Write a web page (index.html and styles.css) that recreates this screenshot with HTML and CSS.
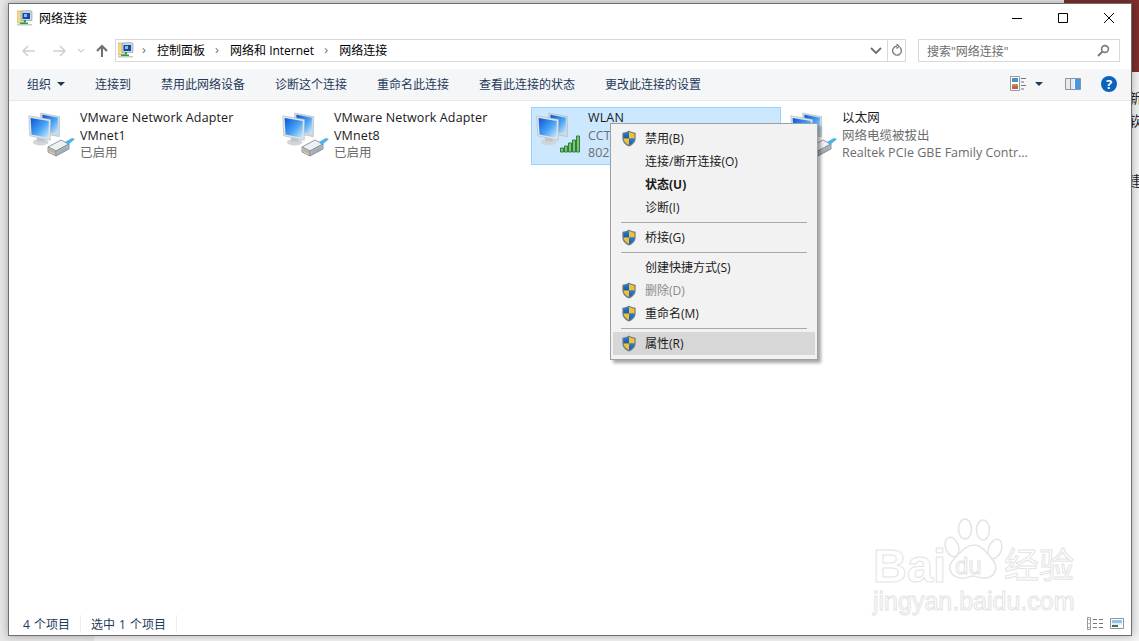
FILE: index.html
```html
<!DOCTYPE html>
<html lang="zh-CN">
<head>
    <meta charset="UTF-8">
    <title>网络连接</title>
    <link rel="stylesheet" href="styles.css">
</head>
<body>
    <!-- Icon definitions -->
    <svg class="defs" width="0" height="0">
        <defs>
            <linearGradient id="screen" x1="0" y1="0" x2="1" y2="1">
                <stop offset="0" stop-color="#0a55d8"/>
                <stop offset="0.55" stop-color="#4aa4f4"/>
                <stop offset="1" stop-color="#d5eeff"/>
            </linearGradient>
            <linearGradient id="shieldLeft" x1="0" y1="0" x2="0" y2="1">
                <stop offset="0" stop-color="#2a7fd8"/>
                <stop offset="1" stop-color="#0b5cb5"/>
            </linearGradient>
            <symbol id="monitors" viewBox="0 0 44 38">
                <path d="M15 2l21 4-.5 22-20-4z" fill="#cfd8df" stroke="#aab4bc" stroke-width=".6"/>
                <path d="M17 4l17 3.200-.4 17.800-16.600-3.400z" fill="url(#screen)"/>
                <path d="M2 5l24 4-.5 23L3 27z" fill="#dfe4e8" stroke="#a8b0b6" stroke-width=".6"/>
                <path d="M4 7.500l20 3.200-.4 18.800L5 25.500z" fill="url(#screen)"/>
                <ellipse cx="15" cy="34" rx="8.500" ry="3.600" fill="#d2d5d7"/>
                <path d="M11 29l8 1.500v3l-8-.5z" fill="#bfc5c9"/>
            </symbol>
            <symbol id="plug" viewBox="0 0 28 20">
                <path d="M1 10L14 3l8 4L9 14z" fill="#eef1f3" stroke="#78838c" stroke-width=".8"/>
                <path d="M1 10l8 4v5l-8-4z" fill="#d5dade" stroke="#78838c" stroke-width=".8"/>
                <path d="M9 14l13-7v5L9 19z" fill="#b3bbc2" stroke="#78838c" stroke-width=".8"/>
                <path d="M3 12v2.500M5 13v2.500M7 14v2.500" stroke="#b08a30" stroke-width="1"/>
                <path d="M11 15.500l9-5M11 17l9-5" stroke="#8e98a0" stroke-width=".6"/>
                <path d="M18 5l7-4 3 1-7 6z" fill="#4fb0e8"/>
            </symbol>
            <symbol id="shield" viewBox="0 0 16 18">
                <path d="M8 .5c2 1.500 4.500 2.200 7 2.300v6.200c0 4-3 6.800-7 8.500-4-1.700-7-4.500-7-8.500V2.800C3.500 2.700 6 2 8 .5z" fill="#6b7a88"/>
                <path d="M8 1.800V9H2.200V3.900C4.300 3.700 6.300 3 8 1.800z" fill="url(#shieldLeft)"/>
                <path d="M8 1.800c1.700 1.200 3.700 1.900 5.800 2.100V9H8z" fill="#f6c02c"/>
                <path d="M2.200 9H8v6.900C4.700 14.400 2.400 12.200 2.200 9z" fill="#f6c02c"/>
                <path d="M8 9h5.800c-.2 3.200-2.500 5.400-5.800 6.900z" fill="url(#shieldLeft)"/>
            </symbol>
            <symbol id="folderNet" viewBox="0 0 16 16">
                <path d="M0 1h7v12H0z" fill="#f3dc8c" stroke="#c0a858" stroke-width=".6"/>
                <path d="M4 1.500l8-1.500 3 1.500v9H4z" fill="#ccd4dc" stroke="#8d99a5" stroke-width=".6"/>
                <path d="M5.500 3h7.500v6H5.500z" fill="#1546a8"/>
                <path d="M7 4h3v3H7z" fill="#7ec0f0"/>
                <path d="M7 10h2v2.500H7z" fill="#21a34a"/>
                <path d="M3 12.500h8V15H3z" fill="#21a34a"/>
                <path d="M0 14h15v1.500H0z" fill="#c4c9cc"/>
            </symbol>
        </defs>
    </svg>

    <!-- Scraps of the desktop behind the window -->
    <div class="wallpaper"></div>
    <div class="behind-strip">
        <span class="behind-word word-new">新</span>
        <span class="behind-word word-soft">软</span>
        <span class="behind-word word-build">建</span>
    </div>
    <div class="behind-floor"></div>

    <div class="window">
        <!-- Title bar -->
        <header class="titlebar">
            <svg class="title-icon"><use href="#folderNet"/></svg>
            <span class="title-text">网络连接</span>
            <div class="win-buttons">
                <button class="win-btn">
                    <svg width="12" height="12" viewBox="0 0 12 12"><path d="M1 6.500h10" stroke="#000" fill="none"/></svg>
                </button>
                <button class="win-btn">
                    <svg width="12" height="12" viewBox="0 0 12 12"><path d="M1.500 1.500h9v9h-9z" stroke="#000" fill="none"/></svg>
                </button>
                <button class="win-btn">
                    <svg width="12" height="12" viewBox="0 0 12 12"><path d="M1 1l10 10M11 1L1 11" stroke="#000" fill="none"/></svg>
                </button>
            </div>
        </header>

        <!-- Navigation row -->
        <nav class="navbar">
            <svg class="nav-arrow" width="16" height="14" viewBox="0 0 16 14"><path d="M14 7H2M7 2L2 7l5 5" stroke="#cfcfcf" stroke-width="1.500" fill="none"/></svg>
            <svg class="nav-arrow" width="16" height="14" viewBox="0 0 16 14"><path d="M2 7h12M9 2l5 5-5 5" stroke="#cfcfcf" stroke-width="1.500" fill="none"/></svg>
            <svg class="nav-down" width="8" height="6" viewBox="0 0 8 6"><path d="M1 1l3 3 3-3" stroke="#cfcfcf" stroke-width="1.200" fill="none"/></svg>
            <svg class="nav-up" width="14" height="14" viewBox="0 0 14 14"><path d="M7 13V2M2 7l5-5 5 5" stroke="#6e6e6e" stroke-width="2" fill="none"/></svg>
            <div class="address">
                <svg class="address-icon"><use href="#folderNet"/></svg>
                <span class="crumb-sep">›</span>
                <span class="crumb">控制面板</span>
                <span class="crumb-sep">›</span>
                <span class="crumb">网络和 Internet</span>
                <span class="crumb-sep">›</span>
                <span class="crumb">网络连接</span>
                <svg class="address-down" width="12" height="8" viewBox="0 0 12 8"><path d="M1 1l5 5 5-5" stroke="#6e6e6e" stroke-width="1.800" fill="none"/></svg>
                <span class="address-refresh">
                    <svg width="12" height="13" viewBox="0 0 12 13"><path d="M8.800 3.300a4.400 4.400 0 1 1-2.800-1M5.500 0l2.500 2.300-2.500 2.200" stroke="#7b7b7b" stroke-width="1.400" fill="none"/></svg>
                </span>
            </div>
            <div class="search">
                <span class="search-text">搜索"网络连接"</span>
                <svg width="13" height="13" viewBox="0 0 13 13"><circle cx="8" cy="5" r="3.400" stroke="#7b7b7b" stroke-width="1.600" fill="none"/><path d="M5.500 7.500L1 12" stroke="#7b7b7b" stroke-width="2"/></svg>
            </div>
        </nav>

        <!-- Command bar -->
        <div class="toolbar">
            <span class="tool tool-menu">组织<i class="caret"></i></span>
            <span class="tool">连接到</span>
            <span class="tool">禁用此网络设备</span>
            <span class="tool">诊断这个连接</span>
            <span class="tool">重命名此连接</span>
            <span class="tool">查看此连接的状态</span>
            <span class="tool">更改此连接的设置</span>
            <div class="tool-right">
                <svg class="view-icon" width="17" height="15" viewBox="0 0 17 15">
                    <path d="M.5.500h9v14h-9z" fill="#fff" stroke="#9a9a9a"/>
                    <path d="M2 2h6v4H2z" fill="#4d8fd0"/>
                    <path d="M2 8h3v2H2z" fill="#d88a3a"/>
                    <path d="M5 8h3v2H5z" fill="#7fb04a"/>
                    <path d="M2 10h6v3H2z" fill="#c85a5a"/>
                    <path d="M11 2.500h5M11 6h3M11 9.500h5M11 13h3" stroke="#6e7680"/>
                </svg>
                <i class="caret caret-view"></i>
                <svg class="pane-icon" width="16" height="12" viewBox="0 0 16 12">
                    <path d="M.5.500h15v11H.5z" fill="#fff" stroke="#8d949b"/>
                    <path d="M1 1h4v10H1zM6 1h3v10H6z" fill="#e8ebee"/>
                    <path d="M5.500 1v10" stroke="#8d949b"/>
                    <path d="M10 1h5v10h-5z" fill="#3f9be8"/>
                </svg>
                <span class="help">?</span>
            </div>
        </div>

        <!-- Connections -->
        <main class="content">
            <div class="tile">
                <div class="tile-icon">
                    <svg class="icon-monitors"><use href="#monitors"/></svg>
                    <svg class="icon-plug"><use href="#plug"/></svg>
                </div>
                <div class="tile-text">
                    <div>VMware Network Adapter</div>
                    <div>VMnet1</div>
                    <div class="muted">已启用</div>
                </div>
            </div>
            <div class="tile">
                <div class="tile-icon">
                    <svg class="icon-monitors"><use href="#monitors"/></svg>
                    <svg class="icon-plug"><use href="#plug"/></svg>
                </div>
                <div class="tile-text">
                    <div>VMware Network Adapter</div>
                    <div>VMnet8</div>
                    <div class="muted">已启用</div>
                </div>
            </div>
            <div class="tile tile-selected">
                <div class="tile-icon">
                    <svg class="icon-monitors"><use href="#monitors"/></svg>
                    <svg class="icon-bars" width="22" height="18" viewBox="0 0 22 18">
                        <path d="M1.500 13h3v4h-3zM5.500 11h3v6h-3zM9.500 8h3v9h-3zM13.500 5h3v12h-3zM17.500 1h3v16h-3z" fill="#7cc47c" stroke="#2f7f3a"/>
                    </svg>
                </div>
                <div class="tile-text">
                    <div>WLAN</div>
                    <div class="muted">CCTV-Home</div>
                    <div class="muted">802.11n</div>
                </div>
            </div>
            <div class="tile">
                <div class="tile-icon">
                    <svg class="icon-monitors"><use href="#monitors"/></svg>
                    <svg class="icon-plug"><use href="#plug"/></svg>
                </div>
                <div class="tile-text">
                    <div>以太网</div>
                    <div class="muted">网络电缆被拔出</div>
                    <div class="muted">Realtek PCIe GBE Family Contr...</div>
                </div>
            </div>

            <!-- Context menu -->
            <ul class="menu">
                <li class="menu-item"><svg class="shield"><use href="#shield"/></svg>禁用(B)</li>
                <li class="menu-item">连接/断开连接(O)</li>
                <li class="menu-item menu-default">状态(U)</li>
                <li class="menu-item">诊断(I)</li>
                <li class="menu-sep"></li>
                <li class="menu-item"><svg class="shield"><use href="#shield"/></svg>桥接(G)</li>
                <li class="menu-sep"></li>
                <li class="menu-item">创建快捷方式(S)</li>
                <li class="menu-item menu-disabled"><svg class="shield"><use href="#shield"/></svg>删除(D)</li>
                <li class="menu-item"><svg class="shield"><use href="#shield"/></svg>重命名(M)</li>
                <li class="menu-sep"></li>
                <li class="menu-item menu-hover"><svg class="shield"><use href="#shield"/></svg>属性(R)</li>
            </ul>

            <!-- Watermark -->
            <div class="watermark">
                <svg class="paw" width="64" height="76" viewBox="0 0 64 76">
                    <g fill="#fff" stroke="#e4e4e4" stroke-width="1.500">
                        <ellipse cx="11" cy="29" rx="6.500" ry="10" transform="rotate(-20 11 29)"/>
                        <ellipse cx="24" cy="11" rx="6.500" ry="10"/>
                        <ellipse cx="42" cy="12" rx="6.500" ry="10"/>
                        <ellipse cx="54" cy="31" rx="6.500" ry="10" transform="rotate(20 54 31)"/>
                        <path d="M33 27c8 0 12 7 18 14 7 8 4 20-10 19-4 0-6-2-9-2s-6 3-12 2C8 59 6 48 13 41c6-6 12-14 20-14z"/>
                    </g>
                </svg>
                <span class="wm-bai">Bai</span>
                <span class="wm-du">du</span>
                <span class="wm-cn">经验</span>
                <span class="wm-url">jingyan.baidu.com</span>
            </div>
        </main>

        <!-- Status bar -->
        <footer class="statusbar">
            <span class="status-cell">4 个项目</span>
            <span class="status-cell">选中 1 个项目</span>
            <div class="status-right">
                <svg width="16" height="13" viewBox="0 0 16 13">
                    <path d="M.5.500h3v12h-3z" fill="#fff" stroke="#9a9a9a"/>
                    <path d="M1.500 2h1v1h-1zM1.500 6h1v1h-1z" fill="#777"/><path d="M1.500 10h1v1h-1z" fill="#b04040"/>
                    <path d="M6 2.500h4M12 2.500h4M6 6.500h4M12 6.500h4M6 10.500h4M12 10.500h4" stroke="#6e7680"/>
                </svg>
                <svg width="14" height="11" viewBox="0 0 14 11">
                    <path d="M.5.500h13v10H.5z" fill="#fff" stroke="#8d949b"/>
                    <path d="M2 2h10v3H2z" fill="#8cc4ee"/>
                    <path d="M2 5h10v2H2z" fill="#dfeef8"/>
                    <path d="M2 7h6v2H2z" fill="#3c6e5a"/>
                </svg>
            </div>
        </footer>
    </div>
</body>
</html>
```

FILE: styles.css
```css
/* General */
html, body {
    margin: 0;
    height: 100%;
    overflow: hidden;
}

body {
    position: relative;
    background-color: #e6e6e6;
    font-family: "Open Sans", "Noto Sans CJK SC", sans-serif;
    font-size: 12px;
    color: #000;
}

.defs {
    position: absolute;
}

/* Desktop behind the window */
.wallpaper {
    position: absolute;
    top: 0;
    left: 1064px;
    width: 75px;
    height: 72px;
    background-color: #7c2f2b;
}

.behind-strip {
    position: absolute;
    top: 72px;
    left: 1120px;
    width: 19px;
    height: 569px;
    background-color: #f1f1f1;
}

.behind-word {
    position: absolute;
    left: 8px;
    font-size: 14px;
    color: #222;
}

.word-new { top: 15px; }
.word-soft { top: 38px; }
.word-build { top: 98px; }

.behind-floor {
    position: absolute;
    left: 94px;
    top: 636px;
    width: 1045px;
    height: 5px;
    background-color: #f4f4f4;
}

/* Window */
.window {
    position: relative;
    box-sizing: border-box;
    width: 1124px;
    height: 633px;
    margin: 3px 0 0 8px;
    display: flex;
    flex-direction: column;
    background-color: #fff;
    border: 1px solid #6f6f6f;
    box-shadow: 0 0 8px rgba(0, 0, 0, 0.3);
}

/* Title bar */
.titlebar {
    display: flex;
    align-items: center;
    height: 28px;
    padding-left: 8px;
    flex-shrink: 0;
}

.title-icon {
    width: 16px;
    height: 16px;
    margin-right: 6px;
}

.title-text {
    font-size: 12px;
}

.win-buttons {
    display: flex;
    margin-left: auto;
    margin-right: -1px;
}

.win-btn {
    width: 46px;
    height: 28px;
    padding: 0;
    display: flex;
    align-items: center;
    justify-content: center;
    border: none;
    background: none;
}

/* Navigation */
.navbar {
    display: flex;
    align-items: center;
    height: 37px;
    flex-shrink: 0;
    padding-left: 12px;
}

.nav-arrow {
    margin-right: 14px;
}

.nav-down {
    margin-left: -4px;
    margin-right: 10px;
}

.nav-up {
    margin-right: 6px;
}

.address {
    box-sizing: border-box;
    width: 791px;
    height: 23px;
    display: flex;
    align-items: center;
    border: 1px solid #d9d9d9;
}

.address-icon {
    width: 16px;
    height: 16px;
    margin: 0 8px 2px 2px;
}

.crumb {
    margin-right: 10px;
    margin-bottom: 2px;
    white-space: nowrap;
}

.crumb-sep {
    width: 15px;
    margin-bottom: 2px;
    color: #6e6e6e;
    font-size: 13px;
    line-height: 1;
}

.address-down {
    margin-left: auto;
    margin-right: 5px;
}

.address-refresh {
    display: flex;
    align-items: center;
    justify-content: center;
    width: 17px;
    height: 21px;
    border-left: 1px solid #d9d9d9;
}

.search {
    box-sizing: border-box;
    width: 202px;
    height: 23px;
    margin-left: 12px;
    display: flex;
    align-items: center;
    justify-content: space-between;
    padding: 0 9px 0 8px;
    border: 1px solid #d9d9d9;
    color: #6d6d6d;
}

/* Toolbar */
.toolbar {
    display: flex;
    align-items: center;
    gap: 30px;
    height: 32px;
    flex-shrink: 0;
    padding: 0 0 2px 18px;
    background-color: #f5f6f7;
    border-bottom: 1px solid #e5e8ec;
    box-sizing: border-box;
    color: #1e395b;
}

.tool-menu {
    display: flex;
    align-items: center;
    gap: 6px;
}

.caret {
    display: inline-block;
    width: 0;
    height: 0;
    border-left: 4px solid transparent;
    border-right: 4px solid transparent;
    border-top: 4px solid #1e395b;
}

.tool-right {
    display: flex;
    align-items: center;
    margin-left: auto;
    margin-right: 14px;
}

.caret-view {
    margin-left: 8px;
}

.pane-icon {
    margin-left: 22px;
}

.help {
    width: 16px;
    height: 16px;
    margin-left: 20px;
    border-radius: 50%;
    background-color: #0a64bd;
    color: #fff;
    font-weight: bold;
    font-size: 13px;
    line-height: 16px;
    text-align: center;
}

/* Connections */
.content {
    position: relative;
    flex: 1;
    display: flex;
    align-items: flex-start;
    gap: 4px;
    padding: 6px 0 0 14px;
}

.tile {
    box-sizing: border-box;
    width: 250px;
    height: 58px;
    display: flex;
    border: 1px solid transparent;
}

.tile-selected {
    background-color: #cce8ff;
    border-color: #99d1ff;
}

.tile-icon {
    position: relative;
    width: 56px;
    height: 56px;
    flex-shrink: 0;
}

.icon-monitors {
    position: absolute;
    left: 3px;
    top: 3px;
    width: 40px;
    height: 35px;
}

.icon-plug {
    position: absolute;
    left: 23px;
    top: 29px;
    width: 28px;
    height: 20px;
}

.icon-bars {
    position: absolute;
    left: 27px;
    top: 27px;
}

.tile-text {
    padding-top: 1px;
    font-size: 12.500px;
    line-height: 17.500px;
    letter-spacing: 0.140px;
    white-space: nowrap;
    color: #1a1a1a;
}

.muted {
    color: #6d6d6d;
    letter-spacing: 0;
}

/* Context menu */
.menu {
    position: absolute;
    left: 601px;
    top: 22px;
    box-sizing: border-box;
    width: 208px;
    height: 237px;
    margin: 0;
    padding: 3px 2px;
    list-style: none;
    background-color: #f2f2f2;
    border: 1px solid #a0a0a0;
    box-shadow: 3px 3px 3px rgba(0, 0, 0, 0.35);
}

.menu-item {
    position: relative;
    height: 23px;
    padding-left: 32px;
    line-height: 23px;
    color: #1a1a1a;
}

.menu-default {
    font-weight: bold;
}

.menu-disabled {
    color: #8a8a8a;
}

.menu-hover {
    background-color: #d7d7d7;
}

.menu-sep {
    height: 1px;
    margin: 3px 8px 3px 8px;
    background-color: #a8a8a8;
}

.shield {
    position: absolute;
    left: 8px;
    top: 3px;
    width: 16px;
    height: 17px;
}

/* Watermark */
.watermark {
    position: absolute;
    right: 0;
    top: 0;
    width: 0;
    height: 0;
    font-family: "Liberation Sans", "Noto Sans CJK SC", sans-serif;
}

.watermark span {
    position: absolute;
    line-height: 1;
    color: #fff;
    -webkit-text-stroke: 1px #e4e4e4;
    white-space: nowrap;
}

.paw {
    position: absolute;
    left: -190px;
    top: 417px;
}

.wm-bai {
    left: -258px;
    top: 441px;
    font-size: 47px;
    font-weight: bold;
}

.wm-du {
    left: -176px;
    top: 453px;
    font-size: 24px;
}

.wm-cn {
    left: -127px;
    top: 447px;
    font-size: 35px;
}

.wm-url {
    left: -258px;
    top: 488px;
    font-size: 25px;
}

/* Status bar */
.statusbar {
    display: flex;
    align-items: center;
    height: 24px;
    flex-shrink: 0;
    padding: 1px 0 0 14px;
    box-sizing: border-box;
    color: #1e395b;
    word-spacing: 1px;
}

.status-cell {
    padding-right: 10px;
    margin-right: 10px;
    border-right: 1px solid #eeeeee;
}

.status-right {
    display: flex;
    align-items: center;
    gap: 7px;
    margin-left: auto;
    margin-right: 7px;
}
```
